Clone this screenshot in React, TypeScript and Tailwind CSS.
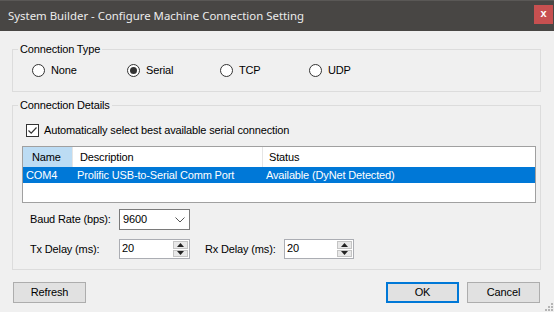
import React from 'react';

const ui = { fontFamily: '"Liberation Sans", Arial, sans-serif' };

const Radio: React.FC<{ label: string; checked?: boolean; width: string }> = ({ label, checked, width }) => (
  <div className={`flex items-center gap-[6px] ${width}`}>
    <div className="flex h-[13px] w-[13px] items-center justify-center rounded-full border border-[#333333] bg-white">
      {checked && <div className="h-[7px] w-[7px] rounded-full bg-[#333333]" />}
    </div>
    <span>{label}</span>
  </div>
);

const Spinner: React.FC<{ value: string; width: string }> = ({ value, width }) => (
  <div className={`flex h-[20px] ${width} items-stretch border border-[#abadb3] bg-white`}>
    <span className="flex-1 pl-[2px] leading-[17px]">{value}</span>
    <div className="my-[1px] mr-[1px] flex w-[15px] flex-col gap-[1px]">
      <div className="flex flex-1 items-center justify-center border border-[#c4c4c4] bg-[#e8e8e8]">
        <svg width="7" height="4" viewBox="0 0 7 4">
          <path d="M3.5 0 L7 4 L0 4 Z" fill="#222" />
        </svg>
      </div>
      <div className="flex flex-1 items-center justify-center border border-[#c4c4c4] bg-[#e8e8e8]">
        <svg width="7" height="4" viewBox="0 0 7 4">
          <path d="M0 0 L7 0 L3.5 4 Z" fill="#222" />
        </svg>
      </div>
    </div>
  </div>
);

const Button: React.FC<{ label: string; primary?: boolean }> = ({ label, primary }) => (
  <button
    className={`h-[21px] w-[73px] bg-[#e1e1e1] text-[11px] tracking-[-0.15px] text-black ${
      primary ? 'border-2 border-[#0078d7]' : 'border border-[#adadad]'
    }`}
  >
    {label}
  </button>
);

const App: React.FC = () => {
  return (
    <div
      className="relative flex h-[312px] w-[554px] flex-col overflow-hidden bg-[#f0f0f0] text-[11px] tracking-[-0.15px] text-black"
      style={ui}
    >
      {/* title bar */}
      <div className="flex h-[31px] items-center justify-between border-t border-[#5a5856] bg-[#484644] pl-[8px]">
        <span
          className="text-[11.4px] tracking-normal text-[#ececec]"
          style={{ fontFamily: '"Noto Sans", "Open Sans", sans-serif' }}
        >
          System Builder - Configure Machine Connection Setting
        </span>
        <div className="mb-[3px] mr-[1px] flex h-[19px] w-[19px] items-center justify-center bg-[#c75050] pb-[2px] text-[11px] font-bold text-white">
          x
        </div>
      </div>

      <div className="flex flex-col px-[12px]">
        <fieldset className="mt-[12px] w-[529px] border border-[#dcdcdc] pb-[13px]">
          <legend className="ml-[5px] px-[2px] leading-[13px]">Connection Type</legend>
          <div className="ml-[19px] mt-[7px] flex h-[15px] items-center">
            <Radio label="None" width="w-[95px]" />
            <Radio label="Serial" checked width="w-[93px]" />
            <Radio label="TCP" width="w-[89px]" />
            <Radio label="UDP" width="w-[80px]" />
          </div>
        </fieldset>

        <fieldset className="mt-[7px] w-[529px] border border-[#dcdcdc] pb-[10px]">
          <legend className="ml-[5px] px-[2px] leading-[13px]">Connection Details</legend>
          <div className="ml-[13px] mt-[12px] flex h-[13px] items-center gap-[5px]">
            <div className="flex h-[13px] w-[13px] items-center justify-center border border-[#333333] bg-white">
              <svg width="11" height="11" viewBox="0 0 11 11">
                <path d="M1.5 5.5 L4.2 8.2 L9.5 2.5" fill="none" stroke="#333" strokeWidth="1.2" />
              </svg>
            </div>
            <span>Automatically select best available serial connection</span>
          </div>

          <div className="ml-[9px] mt-[9px] flex h-[57px] w-[514px] flex-col border border-[#a0a0a0] bg-white">
            <div className="flex h-[20px] items-stretch">
              <div className="flex w-[50px] items-center border-r border-[#e5e5e5] bg-[#bcdcf4] pl-[9px]">Name</div>
              <div className="flex w-[190px] items-center border-r border-[#e5e5e5] pl-[7px]">Description</div>
              <div className="flex flex-1 items-center pl-[6px]">Status</div>
            </div>
            <div className="flex h-[16px] items-center bg-[#0078d7] text-white">
              <div className="w-[50px] pl-[3px]">COM4</div>
              <div className="w-[190px] pl-[4px]">Prolific USB-to-Serial Comm Port</div>
              <div className="flex-1 pl-[3px]">Available (DyNet Detected)</div>
            </div>
          </div>

          <div className="ml-[17px] mt-[6px] flex items-center">
            <span className="w-[89px]">Baud Rate (bps):</span>
            <div className="flex h-[21px] w-[71px] items-center justify-between border border-[#7a7a7a] bg-white pl-[3px] pr-[4px]">
              <span>9600</span>
              <svg width="10" height="6" viewBox="0 0 10 6">
                <path d="M0.5 0.5 L5 5 L9.5 0.5" fill="none" stroke="#555" strokeWidth="1" />
              </svg>
            </div>
          </div>

          <div className="ml-[17px] mt-[9px] flex items-center">
            <span className="w-[89px]">Tx Delay (ms):</span>
            <Spinner value="20" width="w-[71px]" />
            <span className="ml-[15px] w-[79px]">Rx Delay (ms):</span>
            <Spinner value="20" width="w-[70px]" />
          </div>
        </fieldset>

        <div className="mt-[12px] flex items-center">
          <div className="ml-[1px]">
            <Button label="Refresh" />
          </div>
          <div className="ml-auto flex gap-[8px] pr-[2px]">
            <Button label="OK" primary />
            <Button label="Cancel" />
          </div>
        </div>
      </div>

      {/* resize grip */}
      <svg className="absolute bottom-[1px] right-[1px]" width="9" height="9" viewBox="0 0 9 9">
        <rect x="7" y="1" width="2" height="2" fill="#b5b5b5" />
        <rect x="4" y="4" width="2" height="2" fill="#b5b5b5" />
        <rect x="7" y="4" width="2" height="2" fill="#b5b5b5" />
        <rect x="1" y="7" width="2" height="2" fill="#b5b5b5" />
        <rect x="4" y="7" width="2" height="2" fill="#b5b5b5" />
        <rect x="7" y="7" width="2" height="2" fill="#b5b5b5" />
      </svg>
    </div>
  );
};

export default App;
